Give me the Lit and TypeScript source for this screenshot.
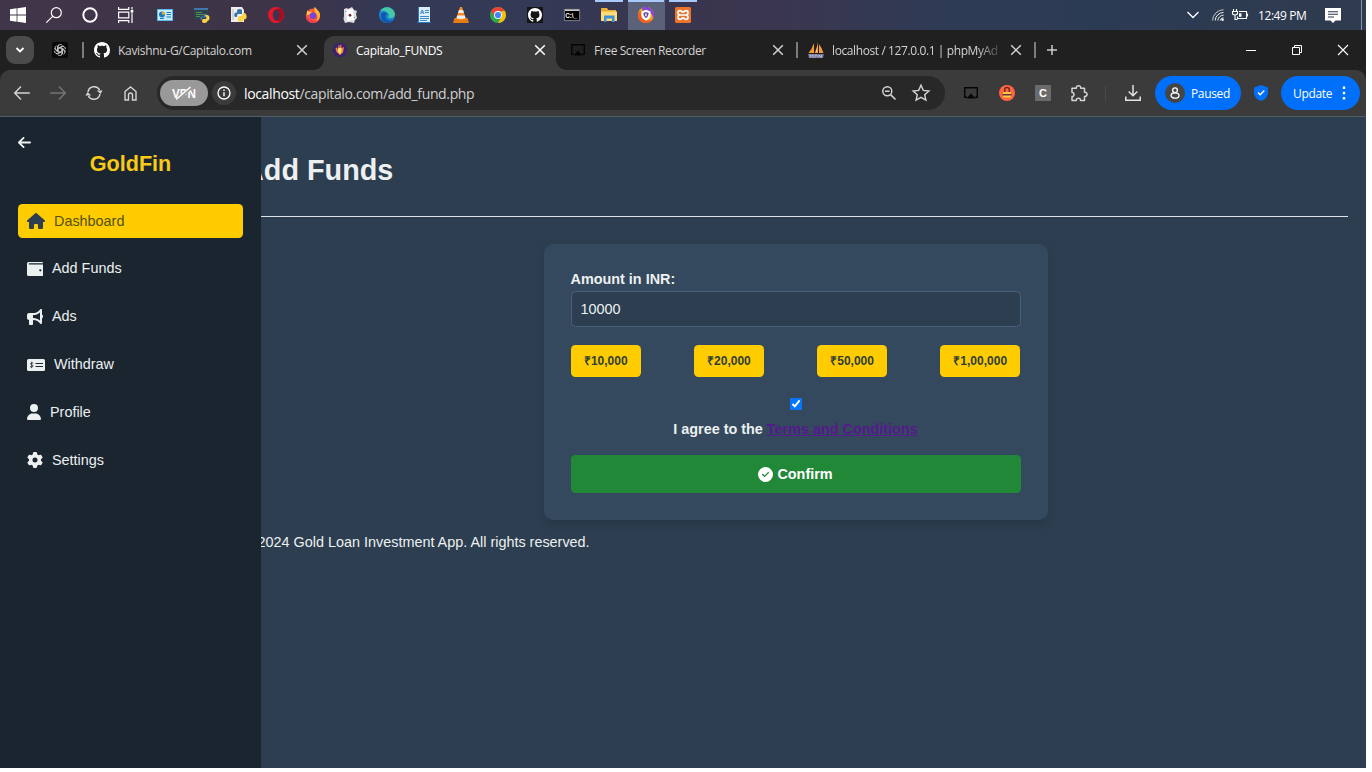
import { LitElement, html, svg, css } from "lit";
import { customElement } from "lit/decorators.js";

const icon = (w: number, h: number, box: string, body: unknown) =>
  html`<svg width=${w} height=${h} viewBox=${box} aria-hidden="true">${body}</svg>`;

const githubPath =
  "M8 0C3.58 0 0 3.58 0 8c0 3.54 2.29 6.53 5.47 7.59.4.07.55-.17.55-.38 0-.19-.01-.82-.01-1.49-2.01.37-2.53-.49-2.69-.94-.09-.23-.48-.94-.82-1.13-.28-.15-.68-.52-.01-.53.63-.01 1.08.58 1.23.82.72 1.21 1.87.87 2.33.66.07-.52.28-.87.51-1.07-1.78-.2-3.64-.89-3.64-3.95 0-.87.31-1.59.82-2.15-.08-.2-.36-1.02.08-2.12 0 0 .67-.21 2.2.82.64-.18 1.32-.27 2-.27.68 0 1.36.09 2 .27 1.53-1.04 2.2-.82 2.2-.82.44 1.1.16 1.92.08 2.12.51.56.82 1.27.82 2.15 0 3.07-1.87 3.75-3.65 3.95.29.25.54.73.54 1.48 0 1.07-.01 1.93-.01 2.2 0 .21.15.46.55.38A8.013 8.013 0 0 0 16 8c0-4.42-3.58-8-8-8z";

/* Launcher glyphs share a 16 unit box */
const launchers = {
  windows: svg`<path fill="#fff" d="M0 2.3 6.6 1.3V7.6H0zM7.4 1.2 16 0V7.6H7.4zM0 8.4H6.6V14.7L0 13.7zM7.4 8.4H16V16L7.4 14.8z"/>`,
  search: svg`<g fill="none" stroke="#fff" stroke-width="1.2"><circle cx="10.3" cy="5.7" r="5"/><path d="M6.7 9.300 .3 15.7"/></g>`,
  cortana: svg`<circle cx="8" cy="8" r="6.7" fill="none" stroke="#fff" stroke-width="1.9"/>`,
  taskview: svg`<path fill="none" stroke="#fff" stroke-width="1.2" d="M.6 0v2.4h10.200V0M.6 5.200h10.200v5.600H.6zM.6 16v-2.400h10.200V16M14 0v2.500M14 6.200V16"/><path fill="#fff" d="M12.700 3h2.600v2.700h-2.600z"/>`,
  control: svg`<rect y="2" width="16" height="12" rx=".6" fill="#5cb8ee"/><rect x="1" y="3" width="14" height="10" fill="#c5ecfb"/><circle cx="5" cy="7.500" r="3" fill="#2179bd"/><path fill="#f5a623" d="M5 7.500V4.500a3 3 0 0 1 3 3z"/><path stroke="#1d78b9" d="M9.500 5.500h4.500M9.500 7.500h4.500M3 11.500h4M9.500 10h4.500"/>`,
  idle: svg`<rect y="1" width="14" height="11" fill="#30434c"/><rect y="1" width="14" height="2" fill="#3e78aa"/><path stroke="#57a455" stroke-width=".8" d="M2 5.500h6M2 7.500h8M2 9.500h4"/><path fill="#3f7bb0" d="M9 7h3.500v3.500H8V13H6.500V9.500H10z"/><path fill="#ffd343" d="M11 8h2q2.500 0 2.500 3 0 2.500-2 3l-1 1.500q-3 1-4.500-.5 0-3 1.500-3h2q1 0 1-1.500z"/>`,
  python: svg`<path fill="#eee" d="M0 0h11l2 3v12H0z"/><path stroke="#bbb" d="M2 2v11"/><path fill="#3876a9" d="M6 3q3-2 5 0v4H7q-1 0-1 3H5Q2.500 10 3.500 6.500q.5-1.300 4-1.300H6z"/><path fill="#ffd343" d="M11.500 6h2.200Q16 7 15.500 11q-.4 1.600-3.500 1.600V14q-2.500 2-5-.2V10.500q0-1.500 1.500-1.500h2.500q.5 0 .5-3z"/>`,
  opera: svg`<circle cx="8" cy="8" r="8" fill="#e5172c"/><path fill="#a70d20" d="M8 2.500c2-1.300 4-1 5-.6A8 8 0 0 1 13 14.100c-2 .8-3.500 0-5-.6z"/><ellipse cx="8" cy="8" rx="3.200" ry="5.500" fill="#3c3550"/>`,
  firefox: svg`<circle cx="8" cy="8.800" r="7.200" fill="#fb5a32"/><path fill="#ffb636" d="M9.300 0c3 1.500 3 3.500 4.500 4.300C16.200 8 15 13.500 10 14.800c3-2 3.600-5.300 1-8C9 5 9.300 2 9.300 0z"/><path fill="#ffcf4a" d="M2 3.500 4 5l3-.5L5.500 7 2 8z"/><circle cx="8" cy="8.800" r="3.300" fill="#7a43dc"/><path fill="#f43d54" d="M.9 9q1 6 7.100 7 4 0 6-3-5 2.300-8.500-.8z"/>`,
  cards: svg`<path fill="#ddd" d="m2 2 3-1 1 1 4-2 2 3 3 1-1 3 1 4-2 2-1 3-5-1-4 1-1.500-4L2 9z"/><path fill="#fff" d="m4 3 7-1 1 11-7 1z"/><path fill="#6b2b35" d="m8 6.500 1.800 1.800L8 10 6.200 8.300z"/><path fill="#888" d="M3.500 4h1v1h-1zM12 10h1v1h-1z"/>`,
  edge: svg`<circle cx="8" cy="8" r="8" fill="#1687d8"/><path fill="#46c8a4" d="M1 4.500C4-1.500 14-1.500 16 7q0 4-4.500 4-3 0-2-1.500Q10.500 7 8 5.200 4 2.800 1 4.500z"/><path fill="#1559ae" d="M2 7c3-3.200 6-1 6.500.5C5.500 7.500 6 12.800 11 13.500q2 .2 3.500-.6Q12 16.500 7 16 1 14 2 7z"/>`,
  notepad: svg`<path fill="#d9eef9" d="M2 0h12v15H2z"/><path fill="#2a78be" d="M1 15h14v1H1zM2 0h1v15H2z"/><text x="4" y="7" font-size="6" font-weight="bold" fill="#1d6aad">A</text><path stroke="#3c8bc9" d="M9 3.500h4M9 5.500h4M4 9.500h9M4 11.500h9M4 13.500h7"/>`,
  vlc: svg`<path fill="#e77a14" d="M1.500 11h13l1.500 5H0z"/><path fill="#f58a1c" d="M7 0h2l4 12q-5 2.500-10 0z"/><path fill="#eee" d="M6 3h4l1 3H5zM4.200 8.500h7.600l.7 2.500q-4.500 2-9 0z"/>`,
  chrome: svg`<circle cx="8" cy="8" r="8" fill="#2da94f"/><path fill="#ea4335" d="M1.100 4A8 8 0 0 1 14.900 4H8L4.500 10z"/><path fill="#fbbc05" d="M14.900 4A8 8 0 0 1 8 16l3.500-6V4z"/><circle cx="8" cy="8" r="4" fill="#fff"/><circle cx="8" cy="8" r="3.100" fill="#4285f4"/>`,
  github: svg`<path fill="#151515" d="M0 0h16v16H0z"/><path fill="#fff" transform="translate(1 1) scale(.875)" d=${githubPath}/>`,
  cmd: svg`<path fill="#000" stroke="#aaa" stroke-width=".7" d="M.4 2.400h15.200v11.200H.4z"/><path fill="#ccc" d="M1 2.500h14v1.500H1z"/><text x="1.200" y="10.800" font-size="6.300" font-weight="bold" fill="#fff">C:\\_</text>`,
  explorer: svg`<path fill="#e9ae35" d="M0 1h6l1.300 2H15v11H0z"/><path fill="#ffdc75" d="M0 4.500h16V14H0z"/><path fill="#3b92d4" d="M3 8.500h10.500V15H11v-3.500H5.500V15H3z"/>`,
  avast: svg`<circle cx="8" cy="8" r="8" fill="#f7a61b"/><path fill="#8247d7" d="M4 1.100A8 8 0 0 1 15 12Q15 6 10 4.500 7 4 5 5z"/><path fill="#ef5e23" d="M0 8q0 8 8 8 5 0 7-4-5 3-9 0Q2 10 3 4 0 5 0 8z"/><path fill="#fff" d="M8 2.800 12.500 4.500v4q0 3-4.500 5.200Q3.500 11.500 3.500 8.500v-4z"/><path fill="#60479a" d="M8 5 10.700 6q0 3.500-2.700 5.300Q5.300 9.500 5.300 6z"/><path fill="#fff" d="M7.300 6.500h1.400V9.300H7.300z"/>`,
  xampp: svg`<rect width="16" height="16" rx="1.500" fill="#ed742b"/><path fill="none" stroke="#fff" stroke-width="1.700" d="M5 8C2.300 7.500 2.300 3.700 5 3.700c1.600 0 1.600 1.400 3 1.400s1.400-1.400 3-1.400c2.700 0 2.700 3.800 0 4.300 2.700.5 2.700 4.300 0 4.300-1.600 0-1.600-1.400-3-1.400s-1.400 1.400-3 1.400C2.300 12.300 2.300 8.500 5 8zM5 8h6"/>`,
};

const sys = ["windows", "search", "cortana", "taskview"] as const;
const apps = ["control", "idle", "python", "opera", "firefox", "cards", "edge", "notepad", "vlc", "chrome", "github", "cmd", "explorer", "avast", "xampp"] as const;

const cross = icon(16, 16, "0 0 16 16", svg`<path d="M3.200 3.200l9.600 9.600M12.800 3.200l-9.600 9.600" fill="none" stroke="currentColor" stroke-width="1.500"/>`);
const castGlyph = svg`<path d="M4 12.300H1.700V2.700h12.600v9.600H12" fill="none" stroke="#050505" stroke-width="1.400"/><path d="M8 8.600l4.500 5h-9z" fill="#050505"/>`;
const menuDots = icon(4, 16, "0 0 4 16", svg`<path fill="#fff" d="M.8 1.500h2.400v2.400H.8zM.8 6.800h2.400v2.400H.8zM.8 12.100h2.400v2.400H.8z"/>`);

@customElement("desk-taskbar")
class DeskTaskbar extends LitElement {
  static styles = css`
    :host { display: flex; height: 30px; align-items: stretch; font-family: "Open Sans", "Noto Sans", sans-serif;
      background: linear-gradient(90deg, #413549 0, #3d3448 280px, #343956 400px, #343956 540px, #3b354e 720px, #3a3750 800px, #2f3b55 940px, #2c3b54 1100px, #2f3b4e 100%); }
    svg { display: block; overflow: visible; }
    .cell { box-sizing: border-box; display: flex; align-items: center; justify-content: center; width: 36px; flex: none; }
    .apps { display: flex; margin-left: 2.500px; }
    .app { width: 37px; }
    .running { background: linear-gradient(#a9c9fb, #a9c9fb) center top / 28px 2px no-repeat; }
    .current { background: linear-gradient(#a9c9fb, #a9c9fb) center top / 36px 2px no-repeat, #5b6178; }
    .tray { margin-left: auto; display: flex; align-items: center; color: #fff; }
    .time { font-size: 12px; letter-spacing: -0.420px; width: 50px; white-space: nowrap; margin-left: 10px; }
    .note { margin: 1px 20px 0 17px; }
    .peek { width: 4px; height: 30px; border-left: 1px solid #8b93a0; }
    .wifi { margin: 0 8px 0 13px; }
    text { font-family: "Liberation Sans", sans-serif; }
  `;
  render() {
    return html`
      ${sys.map((n) => html`<div class="cell">${icon(16, 16, "0 0 16 16", launchers[n])}</div>`)}
      <div class="apps">
        ${apps.map((n) => html`<div class="cell app ${n === "avast" ? "current" : n === "explorer" || n === "xampp" ? "running" : ""}">${icon(16, 16, "0 0 16 16", launchers[n])}</div>`)}
      </div>
      <div class="tray">
        ${icon(12, 8, "0 0 12 8", svg`<path d="M.5 1 6 6.500 11.500 1" fill="none" stroke="#fff" stroke-width="1.300"/>`)}
        <span class="wifi">${icon(12, 12, "0 0 13 13", svg`<g fill="none" stroke="#fff" stroke-width="1"><path d="M.6 12.500A12 12 0 0 1 12.500 .8" opacity=".75"/><path d="M3.500 12.500A9 9 0 0 1 12.500 3.800"/><path d="M6.300 12.500a6.300 6.300 0 0 1 6.200-5.800M9 12.500a3.500 3.500 0 0 1 3.500-3"/></g><circle cx="11.500" cy="11.700" r="1.300" fill="#fff"/>`)}</span>
        ${icon(16, 12, "0 0 16 12", svg`<path d="M7 2.500h7.500v7H5.500V7.500M15.500 4.500v3M1.500 0v2M4.500 0v2M.5 2.500h5v1.800q0 1.700-2.500 1.700T.5 4.300zM3 6v4.500h2.500" fill="none" stroke="#fff" stroke-width="1.100"/><path d="M7 4.300h2.500v3.500H7z" fill="#fff"/>`)}
        <span class="time">12:49 PM</span>
        <span class="note">${icon(16, 15, "0 0 16 15", svg`<path fill="#fff" d="M0 0h16v12.500h-5.500L8 15l-2.500-2.500H0z"/><path stroke="#29364a" stroke-width="1.100" d="M3 3.700h10M3 6.300h10M3 9h6"/>`)}</span>
        <div class="peek"></div>
      </div>`;
  }
}

@customElement("browser-chrome")
class BrowserChrome extends LitElement {
  static styles = css`
    :host { display: block; background: #202020; font-family: "Open Sans", "Noto Sans", sans-serif; color: #d2d2d2; }
    svg { display: block; overflow: visible; flex: none; }
    .strip { display: flex; height: 40px; align-items: center; font-size: 12px; }
    .list { width: 28px; height: 28px; border-radius: 9px; background: #4b4b4b; display: flex; align-items: center; justify-content: center; margin-left: 6px; }
    .pin { margin: 0 14px 0 18px; }
    .bar { width: 2px; height: 16px; background: #7d7d7d; flex: none; }
    .tab { box-sizing: border-box; width: 238px; height: 34px; display: flex; align-items: center; gap: 8px; padding: 0 14px 0 8px; flex: none; }
    .first { margin-left: 2px; }
    .active { align-self: flex-end; width: 232px; margin-right: 6px; padding-right: 8px; background: #3b3b3b; color: #fff; border-radius: 10px 10px 0 0; position: relative; padding-bottom: 6px; }
    .active::before, .active::after { content: ""; position: absolute; bottom: 0; width: 10px; height: 10px; }
    .active::before { left: -10px; background: radial-gradient(circle at 0 0, transparent 9.500px, #3b3b3b 10px); }
    .active::after { right: -10px; background: radial-gradient(circle at 100% 0, transparent 9.500px, #3b3b3b 10px); }
    .title { flex: 1; min-width: 0; white-space: nowrap; letter-spacing: -0.280px; margin-top: 1px; }
    .t1 { letter-spacing: -0.310px; }
    .t3 { letter-spacing: -0.400px; }
    .fade { letter-spacing: -0.400px; margin-right: 2px; -webkit-mask-image: linear-gradient(90deg, #000 145px, transparent 172px); mask-image: linear-gradient(90deg, #000 145px, transparent 172px); }
    .third { width: 234px; padding-right: 10px; }
    .fourth { width: 234px; margin-left: 2px; padding-right: 10px; }
    .plus { margin-left: 11px; }
    .controls { margin-left: auto; display: flex; color: #fff; }
    .ctl { width: 46px; display: flex; justify-content: center; }
    .bar2 { box-sizing: border-box; height: 47px; display: flex; align-items: center; padding-left: 4px; background: #3b3b3b; border-radius: 10px 10px 0 0; border-bottom: 1px solid #505c66; }
    .nav { width: 36px; display: flex; justify-content: center; flex: none; }
    .pill { box-sizing: border-box; width: 788px; height: 34px; margin: 0 8px 0 9px; border-radius: 17px; background: #282828; display: flex; align-items: center; padding: 0 3px; flex: none; }
    .vpn { width: 48px; height: 26px; border-radius: 13px; background: #999; display: flex; align-items: center; justify-content: center; }
    .info { width: 24px; height: 24px; border-radius: 50%; background: #3b3b3b; margin: 0 8px 0 4px; display: flex; align-items: center; justify-content: center; }
    .url { flex: 1; font-size: 14px; letter-spacing: -0.360px; color: #cfcfcf; white-space: nowrap; }
    .host { color: #fff; }
    .star { margin: 0 12px 0 16px; }
    .sq { width: 16px; height: 16px; background: #6b6b6b; color: #fff; font: bold 11px/16px "Liberation Sans", sans-serif; text-align: center; border-radius: 1px; }
    .line { width: 1px; height: 15px; background: #484848; margin: 0 19px 0 8px; }
    .chip { box-sizing: border-box; height: 34px; border-radius: 17px; background: #0070fa; color: #fff; font-size: 12px; display: flex; align-items: center; white-space: nowrap; letter-spacing: -0.350px; }
    .paused { width: 86px; margin: 0 13px 0 14px; padding-left: 10px; gap: 6px; }
    .avatar { width: 20px; height: 20px; border-radius: 50%; background: #454545; display: flex; align-items: center; justify-content: center; }
    .update { width: 79px; margin-left: 13px; padding-left: 12px; justify-content: space-between; padding-right: 14px; }
    text { font-family: "Liberation Sans", sans-serif; }
  `;
  render() {
    return html`
      <div class="strip">
        <div class="list">${icon(10, 8, "0 0 10 8", svg`<path d="M1.500 2 5 5.500 8.500 2" fill="none" stroke="#fff" stroke-width="1.800"/>`)}</div>
        <div class="pin">${icon(16, 16, "0 0 16 16", svg`<rect width="16" height="16" rx="2" fill="#090909"/><g fill="none" stroke="#ddd" stroke-width=".8">${[0, 60, 120, 180, 240, 300].map((a) => svg`<path transform="rotate(${a} 8 8)" d="M6.200 9V4.600a2.300 2.300 0 0 1 3.700-1.700M6.200 6.200 9.500 4.300a2.200 2.200 0 0 1 2.600.3"/>`)}</g>`)}</div>
        <div class="bar"></div>
        <div class="tab first">${icon(16, 16, "0 0 16 16", svg`<path fill="#fff" d=${githubPath}/>`)}<span class="title t1">Kavishnu-G/Capitalo.com</span>${cross}</div>
        <div class="tab active">
          ${icon(16, 16, "0 0 16 16", svg`<circle cx="8" cy="8" r="7.300" fill="#39236b"/><path fill="#f47e4b" d="M3.500 6 5 5.500l1 2 .5-4.500h.8l.5 3 .6-3.500h.8l.4 4.500 1.500-2 .9.500-1 5L8 13l-3.500-3z"/><path fill="#ffe36b" d="M6.500 6h3v3l-1.500 3.500-2-3z"/>`)}
          <span class="title">Capitalo_FUNDS</span>${cross}
        </div>
        <div class="tab third">${icon(16, 16, "0 0 16 16", castGlyph)}<span class="title t3">Free Screen Recorder</span>${cross}</div>
        <div class="bar"></div>
        <div class="tab fourth">
          ${icon(16, 16, "0 0 16 16", svg`<path fill="#f39a34" d="M6 1v10H.5Q4 7 6 1zM10 0v11H6.700Q9 6 10 0zM11 2q3 4 4.500 9H11z"/><path fill="#d7d7e8" d="M5.500 3.500 4 10M9.300 3 8.200 10h1z"/><path fill="#6f7395" d="M0 12h16l-1 4H1z"/><path stroke="#c8cbe2" d="M2 16v-3.500l1.500 2 1.500-2V16M7 16v-3h2v2M11 16v-3l1.500 2 1-2V16" fill="none" stroke-width=".7"/>`)}
          <span class="title fade">localhost / 127.0.0.1 | phpMyAd</span>${cross}
        </div>
        <div class="bar"></div>
        <div class="plus">${icon(10, 10, "0 0 10 10", svg`<path d="M5 0v10M0 5h10" stroke="#ccc" stroke-width="1.500"/>`)}</div>
        <div class="controls">
          <div class="ctl">${icon(10, 10, "0 0 10 10", svg`<path d="M0 5.500h10" stroke="#fff"/>`)}</div>
          <div class="ctl">${icon(10, 10, "0 0 10 10", svg`<path d="M.5 2.500h7v7h-7zM2.500 2.500v-2h7v7h-2" fill="none" stroke="#fff"/>`)}</div>
          <div class="ctl">${icon(10, 10, "0 0 10 10", svg`<path d="M0 0l10 10M10 0L0 10" stroke="#fff" stroke-width="1.100"/>`)}</div>
        </div>
      </div>
      <div class="bar2">
        <div class="nav">${icon(16, 14, "0 0 16 14", svg`<path d="M15.800 7H.8M7 .6.700 7 7 13.400" fill="none" stroke="#d4d4d4" stroke-width="1.400"/>`)}</div>
        <div class="nav">${icon(16, 14, "0 0 16 14", svg`<path d="M.2 7h15M9 .6 15.300 7 9 13.400" fill="none" stroke="#757575" stroke-width="1.400"/>`)}</div>
        <div class="nav">${icon(18, 16, "0 0 18 16", svg`<path d="M3 6.800A6.200 6.200 0 0 1 14.600 5M15 9.200A6.200 6.200 0 0 1 3.400 11" fill="none" stroke="#d4d4d4" stroke-width="1.500"/><path fill="#d4d4d4" d="M11.800 5.500h5.800L15.500 9zM.4 10.500h5.800L2.600 7z"/>`)}</div>
        <div class="nav">${icon(13, 15, "0 0 13 15", svg`<path d="M1 14V5.500L6.500 1 12 5.500V14H8.500V9a2 2 0 0 0-4 0v5z" fill="none" stroke="#d4d4d4" stroke-width="1.400"/>`)}</div>
        <div class="pill">
          <div class="vpn">${icon(24, 14, "0 0 24 14", svg`<text x="0" y="11.500" font-size="12.500" font-weight="bold" fill="#fff" textLength="24" lengthAdjust="spacingAndGlyphs">VPN</text><path d="M5 14 19.500 1" stroke="#999" stroke-width="3.600"/><path d="M4 13.500 18.500 1" stroke="#fff" stroke-width="1.500"/>`)}</div>
          <div class="info">${icon(14, 14, "0 0 14 14", svg`<circle cx="7" cy="7" r="6" fill="none" stroke="#fff" stroke-width="1.300"/><path stroke="#fff" stroke-width="1.400" d="M7 6.200v4M7 3.500v1.500"/>`)}</div>
          <span class="url"><span class="host">localhost</span>/capitalo.com/add_fund.php</span>
          ${icon(14, 14, "0 0 14 14", svg`<g fill="none" stroke="#d4d4d4" stroke-width="1.500"><circle cx="5.300" cy="5.300" r="4.500"/><path d="M8.600 8.600 13.500 13.500M3 5.300h4.600"/></g>`)}
          <span class="star">${icon(18, 18, "0 0 18 18", svg`<path d="M9 1.300l2.300 5.100 5.600.6-4.200 3.700 1.200 5.500L9 13.400l-4.900 2.800 1.200-5.500L1.100 7l5.600-.6z" fill="none" stroke="#d4d4d4" stroke-width="1.400"/>`)}</span>
        </div>
        <div class="nav">${icon(16, 16, "0 0 16 16", castGlyph)}</div>
        <div class="nav">${icon(16, 16, "0 0 16 16", svg`<circle cx="8" cy="8" r="8" fill="#ff6542"/><path d="M5.700 8V4.500q0-2 2.300-2t2.300 2V8" fill="none" stroke="#6b2520" stroke-width="1.400"/><path fill="#ffcd3c" d="M4 7h8v5.500H4z"/><path fill="#653046" d="M3.500 9h9v1.500h-9z"/>`)}</div>
        <div class="nav"><div class="sq">C</div></div>
        <div class="nav">${icon(18, 18, "0 0 18 18", svg`<path d="M2 4.200h4.300c-.5-3.400 4.900-3.400 4.400 0h3.800v4c3.400-.4 3.400 4.600 0 4.200v4.100h-4c.4-3-4.600-3-4.200 0H2v-3.900c2.700.3 2.700-4.500 0-4.200z" fill="none" stroke="#d4d4d4" stroke-width="1.500" stroke-linejoin="round"/>`)}</div>
        <div class="line"></div>
        ${icon(16, 16, "0 0 16 16", svg`<path d="M8 0v10.500M3.700 6.500 8 10.800l4.300-4.300M.8 11.500v3.700h14.400v-3.700" fill="none" stroke="#e4e4e4" stroke-width="1.500"/>`)}
        <div class="chip paused"><span class="avatar">${icon(10, 12, "0 0 10 12", svg`<circle cx="5" cy="3.200" r="2.400" fill="none" stroke="#fff" stroke-width="1.300"/><ellipse cx="5" cy="8.500" rx="4" ry="2.700" fill="none" stroke="#fff" stroke-width="1.300"/>`)}</span>Paused</div>
        ${icon(14, 16, "0 0 14 16", svg`<path fill="#0070fa" d="M7 0l7 2.500v5.300q0 5.500-7 8.200-7-2.700-7-8.200V2.500z"/><path d="M4 7.500l2.200 2.200L10.300 5.500" fill="none" stroke="#fff" stroke-width="1.400"/>`)}
        <div class="chip update">Update ${menuDots}</div>
      </div>`;
  }
}

const menu = [
  { label: "Dashboard", w: 18, box: "0 0 576 512", body: svg`<path fill="currentColor" d="M575.8 255.500c0 18-15 32.100-32 32.100l-32 0 .7 160.200c0 2.700-.2 5.400-.5 8.100l0 16.200c0 22.100-17.900 40-40 40l-56 0-24 0c-22.100 0-40-17.900-40-40l0-88c0-17.700-14.300-32-32-32l-64 0c-17.700 0-32 14.300-32 32l0 88c0 22.100-17.900 40-40 40l-80 0c-22.100 0-40-17.900-40-40l0-184.500-32 0c-18 0-32-14-32-32.100c0-9 3-17 10-24L266.400 8c7-7 15-8 22-8s15 2 21 7L564.800 231.500c8 7 12 15 11 24z"/>` },
  { label: "Add Funds", w: 16, box: "0 0 16 16", body: svg`<path fill="currentColor" d="M1.500 1H15q1 0 1 1.200H2.500q-1 0-1 .6t1 .6H15.500q1 0 1 1V13.500q0 1.500-1.500 1.500H1.500Q0 15 0 13.500v-11Q0 1 1.500 1zM13.300 8.200a1.100 1.100 0 1 0 0 2.200 1.100 1.100 0 0 0 0-2.200z"/>` },
  { label: "Ads", w: 16, box: "0 0 512 512", body: svg`<path fill="currentColor" d="M480 32c0-12.900-7.800-24.600-19.800-29.600s-25.700-2.200-34.900 6.900L381.700 53c-48 48-113.100 75-181 75l-8.700 0-32 0-96 0c-35.300 0-64 28.700-64 64l0 96c0 35.300 28.700 64 64 64l0 128c0 17.700 14.300 32 32 32l64 0c17.700 0 32-14.300 32-32l0-128 8.700 0c67.900 0 133 27 181 75l43.600 43.600c9.200 9.200 22.900 11.900 34.900 6.900s19.800-16.600 19.800-29.600l0-147.600c18.600-8.800 32-32.500 32-60.400s-13.400-51.600-32-60.400L480 32zm-64 76.700L416 240l0 131.300C357.200 317.800 280.500 288 200.700 288l-8.700 0 0-96 8.700 0c79.800 0 156.500-29.800 215.300-83.300z"/>` },
  { label: "Withdraw", w: 18, box: "0 0 18 16", body: svg`<rect y="2" width="18" height="12" rx="1.500" fill="currentColor"/><path stroke="#1b252f" d="M8.500 6.500h7.500M8.500 9.500h7.500"/><path d="M6.300 6.300q-.7-.8-1.800-.5c-1.300.4-1.200 1.600.1 2 1.600.4 1.800 1.600.4 2.100q-1.300.3-2-.5M4.700 4.800v6.300" fill="none" stroke="#1b252f" stroke-width=".8"/>` },
  { label: "Profile", w: 14, box: "0 0 448 512", body: svg`<path fill="currentColor" d="M224 256A128 128 0 1 0 224 0a128 128 0 1 0 0 256zm-45.700 48C79.800 304 0 383.800 0 482.300C0 498.700 13.300 512 29.700 512l388.600 0c16.400 0 29.700-13.300 29.700-29.700C448 383.800 368.200 304 269.700 304l-91.400 0z"/>` },
  { label: "Settings", w: 16, box: "0 0 512 512", body: svg`<path fill="currentColor" d="M495.900 166.600c3.200 8.700 .5 18.400-6.400 24.600l-43.300 39.400c1.100 8.300 1.700 16.800 1.700 25.400s-.6 17.100-1.700 25.400l43.300 39.400c6.900 6.200 9.600 15.900 6.400 24.600c-4.400 11.900-9.700 23.300-15.800 34.300l-4.700 8.100c-6.600 11-14 21.400-22.100 31.200c-5.900 7.200-15.700 9.600-24.500 6.800l-55.700-17.700c-13.400 10.300-28.200 18.900-44 25.400l-12.500 57.100c-2 9.100-9 16.300-18.200 17.800c-13.800 2.300-28 3.500-42.500 3.500s-28.700-1.200-42.500-3.500c-9.200-1.500-16.200-8.700-18.200-17.800l-12.500-57.100c-15.800-6.500-30.600-15.100-44-25.400L83.100 425.900c-8.800 2.800-18.600 .3-24.500-6.800c-8.100-9.800-15.500-20.200-22.100-31.200l-4.700-8.100c-6.100-11-11.400-22.400-15.800-34.300c-3.200-8.700-.5-18.400 6.400-24.600l43.300-39.400C64.600 273.100 64 264.600 64 256s.6-17.100 1.700-25.400L22.400 191.200c-6.900-6.200-9.600-15.900-6.400-24.600c4.400-11.900 9.700-23.300 15.800-34.300l4.700-8.100c6.600-11 14-21.400 22.100-31.200c5.900-7.200 15.700-9.600 24.500-6.800l55.700 17.700c13.400-10.300 28.200-18.900 44-25.400l12.500-57.100c2-9.100 9-16.300 18.200-17.800C227.300 1.200 241.500 0 256 0s28.700 1.200 42.500 3.500c9.200 1.500 16.200 8.700 18.200 17.800l12.500 57.100c15.800 6.500 30.600 15.100 44 25.400l55.700-17.700c8.800-2.800 18.600-.3 24.500 6.800c8.100 9.800 15.500 20.200 22.100 31.200l4.700 8.100c6.100 11 11.400 22.400 15.800 34.300zM256 336a80 80 0 1 0 0-160 80 80 0 1 0 0 160z"/>` },
];

@customElement("side-menu")
class SideMenu extends LitElement {
  static styles = css`
    :host { box-sizing: border-box; display: block; width: 261px; background: #1b252f; color: #ecf0f1; padding: 17px 18px; }
    svg { display: block; flex: none; }
    .back { height: 17px; display: flex; align-items: center; }
    h2 { margin: 0 0 27.200px; font-size: 21.600px; line-height: 26px; text-align: center; color: #f9ca16; }
    .list { display: flex; flex-direction: column; gap: 13.800px; }
    .item { display: flex; align-items: center; gap: 9px; height: 34px; padding: 0 9px; border-radius: 4.500px; }
    .on { background: #fc0; color: #2c3e50; }
    .on .label { color: #52500f; }
  `;
  render() {
    return html`
      <div class="back">${icon(13, 15, "0 0 448 512", svg`<path fill="currentColor" d="M9.400 233.400c-12.500 12.500-12.500 32.800 0 45.300l160 160c12.500 12.500 32.800 12.500 45.300 0s12.500-32.800 0-45.300L109.200 288 416 288c17.700 0 32-14.300 32-32s-14.300-32-32-32l-306.700 0L214.600 118.600c12.500-12.500 12.500-32.800 0-45.300s-32.800-12.500-45.300 0l-160 160z"/>`)}</div>
      <h2>GoldFin</h2>
      <nav class="list">
        ${menu.map((m, i) => html`<a class="item ${i === 0 ? "on" : ""}">${icon(m.w, 16, m.box, m.body)}<span class="label">${m.label}</span></a>`)}
      </nav>`;
  }
}

@customElement("app-root")
class AppRoot extends LitElement {
  static styles = css`
    :host { display: block; width: 1372px; height: 772px; background: #fff; overflow: hidden; }
    .screen { width: 1366px; height: 768px; display: flex; flex-direction: column; }
    .stage { flex: 1; min-height: 0; display: grid; grid-template-columns: 1fr; font: 14.400px/17px "Liberation Sans", sans-serif; background: #2c3e50; color: #ecf0f1; }
    side-menu { grid-area: 1 / 1; z-index: 1; }
    main { grid-area: 1 / 1; padding: 36px 18px 0 243px; }
    h1 { margin: 0; font-size: 28.800px; line-height: 34px; }
    .rule { height: 1px; background: #dfe4e8; margin: 29px 0 27px; }
    .card { box-sizing: border-box; width: 504px; height: 276px; margin: 0 auto; padding: 27px; background: #34495e; border-radius: 9px; box-shadow: 0 4px 10px rgba(0, 0, 0, 0.120); display: flex; flex-direction: column; font-weight: bold; }
    .field { box-sizing: border-box; height: 36px; margin: 3px 0 18px; padding: 0 9px; font: inherit; font-weight: normal; color: #ecf0f1; background: #2c3e50; border: 1px solid #4a6078; border-radius: 4.500px; }
    .amounts { display: flex; justify-content: space-between; }
    .amount { height: 32px; border: 0; border-radius: 4.500px; padding: 0 13.400px 1px; background: #fc0; color: #2f3e38; font: bold 12px "Liberation Sans", sans-serif; white-space: nowrap; }
    .check { width: 12px; height: 12px; margin: 21px auto 11px; accent-color: #0075ff; }
    .terms { text-align: center; white-space: nowrap; }
    .link { color: #551a8b; text-decoration: underline; }
    .confirm { height: 38px; margin-top: 17px; border: 0; border-radius: 4.500px; background: #218838; color: #fff; font: inherit; display: flex; align-items: center; justify-content: center; gap: 4px; }
    .foot { margin-top: 14px; }
  `;
  render() {
    return html`
      <div class="screen">
        <desk-taskbar></desk-taskbar>
        <browser-chrome></browser-chrome>
        <div class="stage">
          <side-menu></side-menu>
          <main>
            <h1>Add Funds</h1>
            <div class="rule"></div>
            <div class="card">
              <label>Amount in INR:</label>
              <input class="field" type="text" value="10000" />
              <div class="amounts">
                ${["₹10,000", "₹20,000", "₹50,000", "₹1,00,000"].map((a) => html`<button class="amount">${a}</button>`)}
              </div>
              <input class="check" type="checkbox" checked />
              <div class="terms">I agree to the <a class="link">Terms and Conditions</a></div>
              <button class="confirm">${icon(15, 15, "0 0 512 512", svg`<path fill="#fff" d="M256 512A256 256 0 1 0 256 0a256 256 0 1 0 0 512zM369 209L241 337c-9.400 9.400-24.600 9.400-33.900 0l-64-64c-9.400-9.400-9.400-24.600 0-33.900s24.600-9.400 33.900 0l47 47L335 175c9.400-9.400 24.600-9.400 33.900 0s9.400 24.600 0 33.900z"/>`)}<span>Confirm</span></button>
            </div>
            <div class="foot">© 2024 Gold Loan Investment App. All rights reserved.</div>
          </main>
        </div>
      </div>`;
  }
}
